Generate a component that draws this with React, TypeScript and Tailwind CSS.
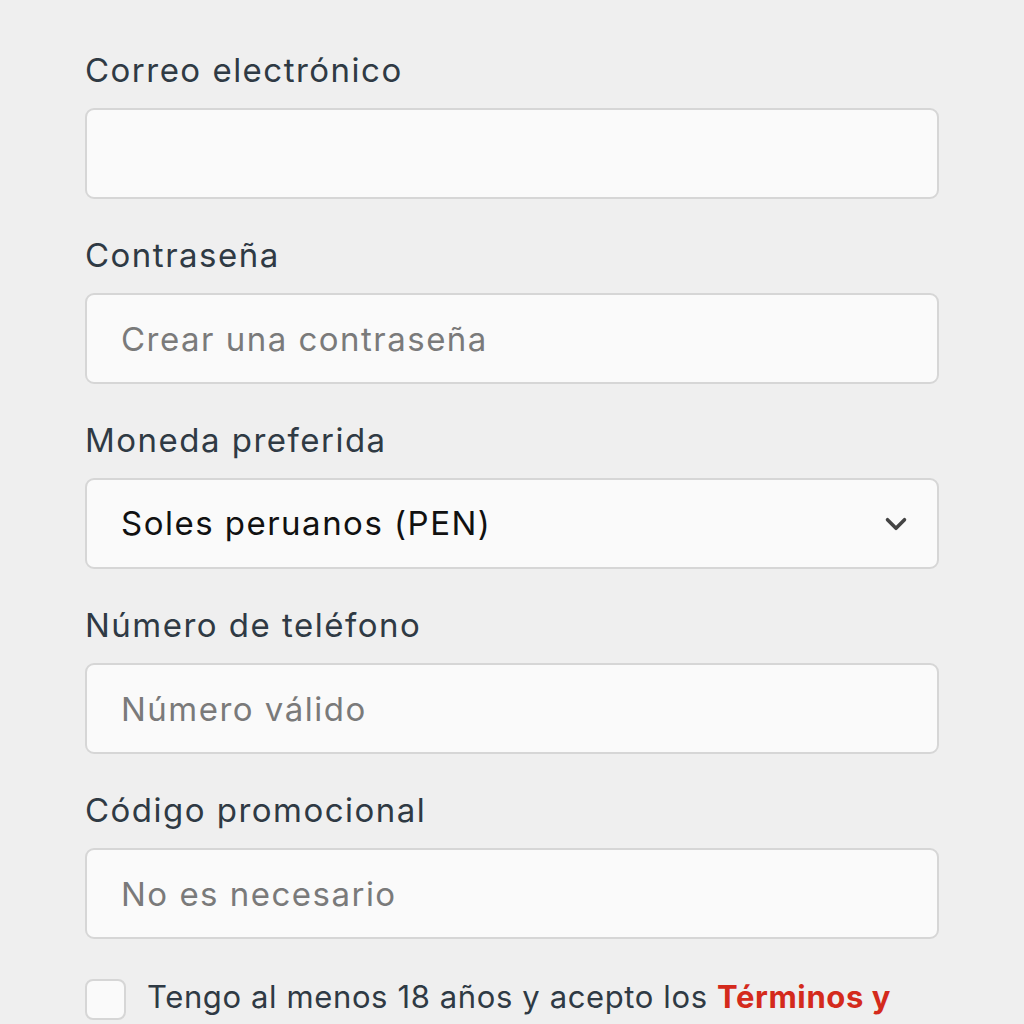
import { ChevronDown } from "lucide-react";

const font = { fontFamily: "Inter, 'Noto Sans', sans-serif" };

function Field({ label, children }: { label: string; children: React.ReactNode }) {
  return (
    <div className="flex flex-col">
      <label className="mb-[18px] h-[40px] text-[33px] leading-[40px] tracking-[0.045em] text-[#2f3a44]">{label}</label>
      {children}
    </div>
  );
}

const inputClass =
  "h-[91px] w-full rounded-[9px] border-2 border-[#d6d6d6] bg-[#fafafa] px-[34px] text-[33px] tracking-[0.045em] text-[#111] outline-none placeholder:text-[#7a7a7a]";

export default function App() {
  return (
    <div className="h-screen overflow-hidden bg-[#efefef] px-[85px] pt-[50px]" style={font}>
      <form className="flex flex-col gap-[36px]" onSubmit={(e) => e.preventDefault()}>
        <Field label="Correo electrónico">
          <input type="email" className={inputClass} />
        </Field>
        <Field label="Contraseña">
          <input type="password" placeholder="Crear una contraseña" className={inputClass} />
        </Field>
        <Field label="Moneda preferida">
          <div className="relative">
            <select className={inputClass + " appearance-none"} defaultValue="PEN">
              <option value="PEN">Soles peruanos (PEN)</option>
              <option value="USD">Dólares (USD)</option>
            </select>
            <ChevronDown className="pointer-events-none absolute right-[26px] top-1/2 h-[34px] w-[34px] -translate-y-1/2 text-[#444]" strokeWidth={2.5} />
          </div>
        </Field>
        <Field label="Número de teléfono">
          <input type="tel" placeholder="Número válido" className={inputClass} />
        </Field>
        <Field label="Código promocional">
          <input type="text" placeholder="No es necesario" className={inputClass} />
        </Field>
      </form>
      <div className="mt-[40px] flex items-start gap-[21px]">
        <input type="checkbox" className="h-[41px] w-[41px] shrink-0 appearance-none rounded-[8px] border-2 border-[#d6d6d6] bg-[#fafafa]" />
        <p className="-mt-[4px] text-[31px] leading-[44px] tracking-[0.02em] text-[#2f3a44]">
          Tengo al menos 18 años y acepto los <span className="font-bold text-[#d42a1c]">Términos y</span>{" "}
          <span className="font-bold text-[#d42a1c]">Condiciones</span>
        </p>
      </div>
    </div>
  );
}
